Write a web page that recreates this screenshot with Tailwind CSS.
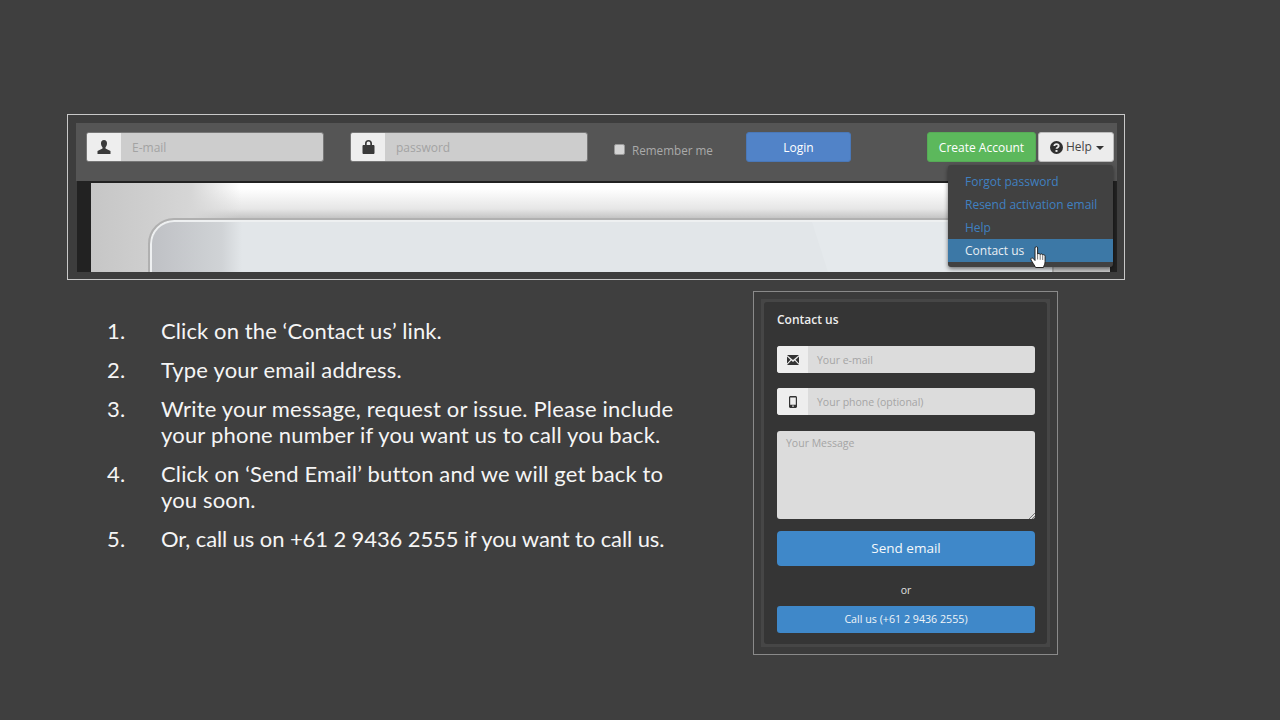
<!DOCTYPE html>
<html lang="en">
<head>
    <meta charset="UTF-8">
    <meta name="viewport" content="width=device-width, initial-scale=1.0">
    <title>Contact us</title>
    <script src="https://cdn.jsdelivr.net/npm/@tailwindcss/browser@4"></script>
</head>
<body class="bg-[#3f3f3f] w-[1280px] h-[720px] overflow-hidden font-['Open_Sans','Noto_Sans',sans-serif]">
    <div class="pt-[114px] pl-[67px]">
        <!-- login bar screenshot -->
        <div class="relative w-[1058px] h-[166px] border border-[#c8c8c8] bg-[#3d3d3d] pt-[8px] pl-[8px]">
            <div class="w-[1041px] h-[58px] bg-[#555555] flex items-start pt-[9px] pl-[10px]">
                <div class="shrink-0 w-[238px] h-[30px] flex rounded-[3px] overflow-hidden border border-[#777] bg-[#cdcdcd]">
                    <div class="w-[34px] bg-[#eeeeee] flex items-center justify-center">
                        <svg class="w-[14px] h-[14px]" viewBox="0 0 14 14"><path fill="#3a3a3a" d="M7 0c2 0 3.100 1.500 3 3.500-.1 1.600-.7 3-1.500 3.800v1.200L13.500 11v3H.5v-3l5-2.500V7.300C4.700 6.500 4.100 5.100 4 3.500 3.900 1.500 5 0 7 0z"/></svg>
                    </div>
                    <span class="pl-[11px] text-[12px] leading-[30px] text-[#a3a3a3]">E-mail</span>
                </div>
                <div class="shrink-0 ml-[26px] w-[238px] h-[30px] flex rounded-[3px] overflow-hidden border border-[#777] bg-[#cdcdcd]">
                    <div class="w-[34px] bg-[#eeeeee] flex items-center justify-center">
                        <svg class="w-[13px] h-[14px]" viewBox="0 0 13 14"><path fill="#3a3a3a" d="M6.500 0C8.700 0 10 1.500 10 3.500V5h1.500c.5 0 1 .5 1 1v7c0 .5-.5 1-1 1h-10c-.5 0-1-.5-1-1V6c0-.5.5-1 1-1H3V3.500C3 1.500 4.300 0 6.500 0zm0 1.600C5.300 1.600 4.700 2.400 4.700 3.500V5h3.600V3.500c0-1.100-.6-1.900-1.800-1.900z"/></svg>
                    </div>
                    <span class="pl-[11px] text-[12px] leading-[30px] text-[#a3a3a3]">password</span>
                </div>
                <div class="shrink-0 ml-[26px] mt-[12px] w-[11px] h-[11px] rounded-[2px] bg-[#d4d4d4] border border-[#999]"></div>
                <span class="shrink-0 w-[81px] whitespace-nowrap ml-[7px] mt-[8px] text-[11.700px] leading-[20px] text-[#aaaaaa]">Remember me</span>
                <div class="shrink-0 ml-[33px] w-[105px] h-[30px] rounded-[3px] bg-[#5183c8] border border-[#4a78b8] text-white text-[12px] leading-[29px] text-center">Login</div>
                <div class="shrink-0 ml-[76px] w-[109px] h-[30px] rounded-[3px] bg-[#5cb85c] border border-[#56ab56] text-white text-[12px] leading-[29px] text-center">Create Account</div>
                <div class="shrink-0 ml-[2px] w-[76px] h-[30px] rounded-[3px] bg-[#ececec] border border-[#bbb] flex items-center pl-[11px] gap-[3px] text-[#444] text-[12px]">
                    <svg class="w-[13px] h-[13px]" viewBox="0 0 13 13"><circle cx="6.500" cy="6.500" r="6.500" fill="#2f2f2f"/><path fill="none" stroke="#ececec" stroke-width="1.800" d="M4.300 5c.1-1.300 1-1.900 2.200-1.900 1.300 0 2.200.7 2.200 1.800 0 1.500-2.200 1.500-2.200 2.900"/><rect x="5.500" y="9" width="2" height="1.900" fill="#ececec"/></svg>
                    <span>Help</span>
                    <span class="ml-[1px] mt-[1px] w-0 h-0 border-x-[4px] border-x-transparent border-t-[4px] border-t-[#333]"></span>
                </div>
            </div>
            <!-- page behind the bar -->
            <div class="ml-[1px] w-[1040px] h-[91px] bg-[#222222] pt-[2px] pl-[14px]">
                <div class="relative w-[1019px] h-[89px] overflow-hidden bg-[#c9c9c9]">
                    <div class="h-[37px] bg-[linear-gradient(to_bottom,#ffffff,#ffffff_15%,#e6e6e6_70%,#bdbdbd)]"></div>
                    <div class="absolute left-0 top-0 w-[150px] h-[89px] bg-[linear-gradient(to_right,#c6c6c6,#cfcfcf_60px,#d6d6d6_100px,transparent)]"></div>
                    <div class="absolute left-[59px] top-[37px] w-[902px] h-[80px] rounded-tl-[24px] border-t-2 border-l-2 border-r-2 border-[#eef0f1] outline-2 outline-[#b0b0b0] bg-[linear-gradient(to_right,#bfc1c5,#d0d3d6_70px,#e2e6e9_90px)]">
                        <div class="absolute left-[660px] top-0 w-[240px] h-[60px] bg-[#e5e9ec] [clip-path:polygon(0_0,100%_0,100%_100%,8%_100%)]"></div>
                    </div>
                </div>
            </div>
            <!-- help dropdown -->
            <div class="absolute left-[880px] top-[50px] w-[165px] h-[102px] rounded-[3px] bg-[#414141] shadow-[0_2px_4px_rgba(0,0,0,0.5)] pt-[5px] pb-[4px] text-[12px] leading-[23px] text-[#4080c0]">
                <div class="pl-[17px]">Forgot password</div>
                <div class="pl-[17px]">Resend activation email</div>
                <div class="pl-[17px]">Help</div>
                <div class="pl-[17px] bg-[#3c78a6] text-[#e8eef3]">Contact us</div>
                <svg class="absolute left-[82px] top-[81px] w-[16px] h-[23px]" viewBox="0 0 16 23"><path fill="#ffffff" stroke="#222" stroke-width="1" stroke-linejoin="round" d="M5 2c0-1.800 2.600-1.800 2.600 0v6.300c.4-1.200 2.400-1.100 2.600.3.400-1.100 2.300-.9 2.500.5.500-.8 2.400-.5 2.400 1.100v5.300c0 2.500-1.100 3.700-1.600 6H5.600C4.400 19 2.400 16.400 1 14c-.8-1.600 1-2.900 2.200-1.600L5 14.500z"/><path stroke="#555" stroke-width=".8" d="M7.600 8.500v5M10.200 8.800v5M12.700 9.300v4.700"/></svg>
            </div>
        </div>

        <div class="flex mt-[11px]">
            <!-- steps -->
            <ol class="w-[686px] pt-[27px] pl-[40px] font-['Lato','Noto_Sans',sans-serif] text-[22px] leading-[26px] tracking-[0.2px] text-[#f5f5f5] flex flex-col gap-[13px]">
                <li class="flex"><span class="w-[54px] shrink-0">1.</span><span class="tracking-[0.1px]">Click on the ‘Contact us’ link.</span></li>
                <li class="flex"><span class="w-[54px] shrink-0">2.</span><span>Type your email address.</span></li>
                <li class="flex"><span class="w-[54px] shrink-0">3.</span><span>Write your message, request or issue. Please include<br>your phone number if you want us to call you back.</span></li>
                <li class="flex"><span class="w-[54px] shrink-0">4.</span><span class="tracking-[0.15px]">Click on ‘Send Email’ button and we will get back to<br>you soon.</span></li>
                <li class="flex"><span class="w-[54px] shrink-0">5.</span><span class="tracking-[-0.1px]">Or, call us on +61 2 9436 2555 if you want to call us.</span></li>
            </ol>
            <!-- contact form screenshot -->
            <div class="w-[305px] h-[364px] border border-[#8a8a8a] bg-[#3b3b3b] p-[7px]">
                <div class="w-full h-full bg-[#464646] p-[3px]">
                    <div class="w-full h-full rounded-[3px] bg-[#353535] pt-[9px] pl-[13px] pr-[12px]">
                        <div class="text-[12px] leading-[18px] font-semibold text-[#eeeeee]">Contact us</div>
                        <div class="mt-[17px] h-[27px] flex rounded-[3px] overflow-hidden bg-[#dcdcdc]">
                            <div class="w-[31px] bg-[#eeeeee] flex items-center justify-center">
                                <svg class="w-[12px] h-[10px]" viewBox="0 0 12 10"><path fill="#333" d="M0 0h12L6 5zM0 1.500 3.500 4.700 0 8.500zM12 1.500 8.500 4.700 12 8.500zM4.300 5.400 6 6.900l1.700-1.500L12 10H0z"/></svg>
                            </div>
                            <span class="pl-[9px] text-[10.500px] leading-[28px] text-[#a5a5a5]">Your e-mail</span>
                        </div>
                        <div class="mt-[15px] h-[27px] flex rounded-[3px] overflow-hidden bg-[#dcdcdc]">
                            <div class="w-[31px] bg-[#eeeeee] flex items-center justify-center">
                                <svg class="w-[8px] h-[12px]" viewBox="0 0 8 12"><path fill="#333" fill-rule="evenodd" d="M1.500 0h5C7.300 0 8 .7 8 1.500v9c0 .8-.7 1.500-1.500 1.500h-5C.7 12 0 11.300 0 10.500v-9C0 .7.700 0 1.500 0zM1.200 1.500v7.300h5.600V1.500zM3.200 9.600v1.200h1.600V9.600z"/></svg>
                            </div>
                            <span class="pl-[9px] text-[10.500px] leading-[28px] text-[#a5a5a5]">Your phone (optional)</span>
                        </div>
                        <div class="relative mt-[16px] h-[88px] rounded-[3px] bg-[#dcdcdc] pl-[9px] pt-[3px] text-[10.500px] leading-[18px] text-[#a5a5a5]">
                            Your Message
                            <svg class="absolute right-0 bottom-0 w-[7px] h-[7px]" viewBox="0 0 7 7"><path stroke="#777" fill="none" d="M1 7 7 1M4 7l3-3"/></svg>
                        </div>
                        <div class="mt-[12px] h-[35px] rounded-[4px] bg-[#3f88c9] text-center text-[13.500px] leading-[35px] text-[#f4f8fb]">Send email</div>
                        <div class="mt-[15px] text-center text-[10.500px] leading-[18px] text-[#e0e0e0]">or</div>
                        <div class="mt-[7px] h-[27px] rounded-[3px] bg-[#3f88c9] text-center text-[10.700px] leading-[27px] font-medium text-[#f0f4f8]">Call us (+61 2 9436 2555)</div>
                    </div>
                </div>
            </div>
        </div>
    </div>
</body>
</html>
